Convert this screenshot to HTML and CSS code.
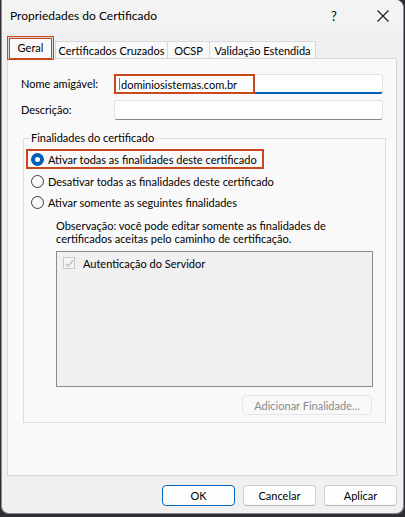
FILE: index.html
```html
<!DOCTYPE html>
<html lang="pt-BR">
<head>
<meta charset="utf-8">
<title>Propriedades do Certificado</title>
<link rel="stylesheet" href="styles.css">
</head>
<body>
<div class="window">
  <div class="titlebar">
    <span class="title">Propriedades do Certificado</span>
    <span class="help">?</span>
    <svg class="close" width="12" height="12" viewBox="0 0 12 12"><path d="M0.5 0.5 L11.5 11.5 M11.5 0.5 L0.5 11.5" stroke="#1a1a1a" stroke-width="1.1" fill="none"/></svg>
  </div>
  <div class="body">
    <div class="tabs">
      <div class="tab active hl">Geral</div>
      <div class="tab">Certificados Cruzados</div>
      <div class="tab">OCSP</div>
      <div class="tab">Validação Estendida</div>
    </div>
    <div class="panel">
      <div class="form">
        <label class="lbl">Nome amigável:</label>
        <div class="input focused"><span class="hl-input"><span class="caret"></span>dominiosistemas.com.br</span></div>
        <label class="lbl">Descrição:</label>
        <div class="input"></div>
      </div>
      <fieldset class="group">
        <legend>Finalidades do certificado</legend>
        <div class="radio-row hl-radio"><span class="radio checked"></span>Ativar todas as finalidades deste certificado</div>
        <div class="radio-row r2"><span class="radio"></span>Desativar todas as finalidades deste certificado</div>
        <div class="radio-row r3"><span class="radio"></span>Ativar somente as seguintes finalidades</div>
        <p class="note">Observação: você pode editar somente as finalidades de<br>certificados aceitas pelo caminho de certificação.</p>
        <div class="list">
          <div class="item">
            <span class="cb"><svg width="9" height="9" viewBox="0 0 9 9"><path d="M1 4.8 L3.4 7.2 L8 1.2" stroke="#b4b4b4" stroke-width="1.2" fill="none"/></svg></span>
            Autenticação do Servidor
          </div>
        </div>
        <div class="group-actions"><button class="btn disabled" disabled>Adicionar Finalidade...</button></div>
      </fieldset>
    </div>
    <div class="footer">
      <button class="btn default">OK</button>
      <button class="btn">Cancelar</button>
      <button class="btn">Aplicar</button>
    </div>
  </div>
</div>
</body>
</html>
```

FILE: styles.css
```css
* { box-sizing: border-box; }
html, body { margin: 0; padding: 0; }
body {
  width: 405px;
  height: 517px;
  background: #2e2e33;
  font-family: Lato, "Noto Sans", sans-serif;
  font-size: 11px;
  color: #000;
  overflow: hidden;
}
.window {
  margin-left: 1px;
  width: 403px;
  height: 514px;
  background: #f0f0f0;
  border: 1px solid #8c8c8c;
  border-top: none;
  border-radius: 0 8px 8px 8px;
  overflow: hidden;
  display: flex;
  flex-direction: column;
}
.titlebar {
  height: 31px;
  flex: none;
  background: #f3f3f3;
  display: flex;
  align-items: center;
  padding-left: 8px;
}
.title { flex: 1; font-size: 12px; }
.help { width: 12px; text-align: center; margin-right: 37px; font-size: 13px; }
.close { margin-right: 14px; }
.body {
  flex: 1;
  display: flex;
  flex-direction: column;
  padding: 6px 6px 0 5px;
}
.tabs {
  display: flex;
  align-items: flex-end;
  height: 22px;
  padding-left: 1px;
  white-space: nowrap;
}
.tab {
  height: 18px;
  background: #f9f9f9;
  border: 1px solid #d9d9d9;
  border-bottom: none;
  border-left: none;
  padding: 0 5px;
  display: flex;
  align-items: center;
  justify-content: center;
  line-height: 1;
}
.tab:nth-child(2) { border-left: 1px solid #d9d9d9; margin-left: 2px; width: 113px; }
.tab:nth-child(3) { width: 42px; }
.tab:nth-child(4) { width: 106px; }
.tab.active {
  height: 22px;
  width: 45px;
  background: #f9f9f9;
  border: 1px solid #d9d9d9;
  border-bottom: none;
  padding: 0 0 3px;
  position: relative;
  z-index: 1;
}
.tab.hl { box-shadow: 0 0 0 1px #c9481c, inset 0 0 0 1px #c9481c; }
.panel {
  margin-top: -1px;
  height: 418px;
  background: #f9f9f9;
  border: 1px solid #d9d9d9;
  padding: 15px 13px 0 13px;
}
.form {
  display: grid;
  grid-template-columns: 93px 1fr;
  row-gap: 6px;
  align-items: start;
}
.lbl { line-height: 20px; height: 20px; }
.input {
  height: 20px;
  background: #fff;
  border: 1px solid #e3e3e3;
  border-bottom-color: #8a8a8a;
  border-radius: 3px;
  display: flex;
  align-items: stretch;
}
.input.focused { border-bottom: 2px solid #005fb8; }
.hl-input {
  width: 141px;
  margin: -1px 0 -2px -1px;
  border: 2px solid #c9481c;
  display: flex;
  align-items: center;
  padding-left: 3px;
  white-space: nowrap;
}
.caret { width: 1px; height: 12px; background: #000; margin-right: 1px; opacity: .5; }
.group {
  margin: 11px 0 0 2px;
  width: 363px;
  border: 1px solid #dcdcdc;
  padding: 0 0 7px 0;
  min-width: 0;
}
.group legend {
  margin-left: 6px;
  padding: 0 1px;
  line-height: 14px;
}
.radio-row {
  height: 20px;
  display: flex;
  align-items: center;
  margin-left: 2px;
  padding-left: 5px;
  white-space: nowrap;
}
.hl-radio { margin-top: 4px; border: 2px solid #c9481c; padding-left: 3px; width: 238px; }
.r2 { margin-top: 2px; }
.r3 { margin-top: 1px; }
.radio {
  width: 13px;
  height: 13px;
  border-radius: 50%;
  border: 1px solid #3c3c3c;
  background: #f9f9f9;
  margin-right: 4px;
  flex: none;
}
.radio.checked {
  border: 4px solid #005fb8;
  background: #fff;
}
.note {
  margin: 7px 0 0 32px;
  line-height: 13px;
  white-space: nowrap;
}
.list {
  margin: 6px 0 0 32px;
  width: 317px;
  height: 136px;
  border: 1px solid #8b8b8b;
  background: #f0f0f0;
  padding: 4px 0 0 6px;
}
.item { display: flex; align-items: center; height: 14px; }
.cb {
  width: 12px;
  height: 12px;
  border: 1px solid #c8c8c8;
  background: #f4f4f4;
  display: flex;
  align-items: center;
  justify-content: center;
  margin-right: 8px;
}
.group-actions {
  display: flex;
  justify-content: flex-end;
  margin: 8px 13px 0 0;
}
.btn {
  font-family: inherit;
  font-size: 11px;
  height: 21px;
  width: 73px;
  background: #fdfdfd;
  border: 1px solid #d0d0d0;
  border-bottom-color: #b5b5b5;
  border-radius: 4px;
  color: #000;
  padding: 0;
}
.btn.disabled {
  width: 130px;
  height: 20px;
  background: #f9f9f9;
  border: 1px solid #e5e5e5;
  color: #8a8a8a;
}
.btn.default { border: 1px solid #0067c0; }
.footer {
  display: flex;
  justify-content: flex-end;
  gap: 8px;
  padding: 9px 0 0 0;
}
```
